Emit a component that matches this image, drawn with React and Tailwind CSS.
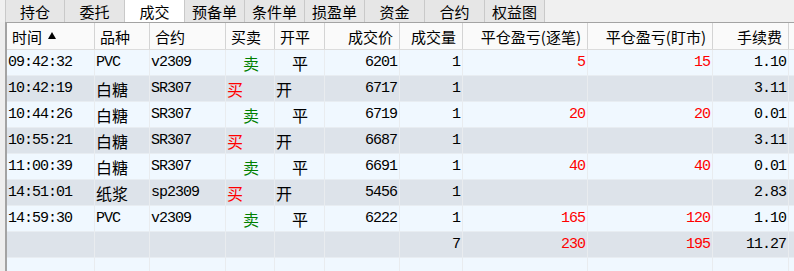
import React from "react";

const CJK = { fontFamily: '"Noto Sans CJK SC", "Noto Sans", sans-serif' };
const MONO = { fontFamily: '"Liberation Mono", "Noto Sans CJK SC", monospace' };

const tabs = ["持仓", "委托", "成交", "预备单", "条件单", "损盈单", "资金", "合约", "权益图"];

const cols = [
  { w: "w-[88px]", h: "时间", ha: "left" },
  { w: "w-[55px]", h: "品种", ha: "left" },
  { w: "w-[76px]", h: "合约", ha: "left" },
  { w: "w-[49px]", h: "买卖", ha: "left" },
  { w: "w-[50px]", h: "开平", ha: "left" },
  { w: "w-[75px]", h: "成交价", ha: "right" },
  { w: "w-[63px]", h: "成交量", ha: "right" },
  { w: "w-[125px]", h: "平仓盈亏(逐笔)", ha: "right" },
  { w: "w-[125px]", h: "平仓盈亏(盯市)", ha: "right" },
  { w: "w-[76px]", h: "手续费", ha: "right" },
];

const rows = [
  ["09:42:32", "PVC", "v2309", "卖", "平", "6201", "1", "5", "15", "1.10"],
  ["10:42:19", "白糖", "SR307", "买", "开", "6717", "1", "", "", "3.11"],
  ["10:44:26", "白糖", "SR307", "卖", "平", "6719", "1", "20", "20", "0.01"],
  ["10:55:21", "白糖", "SR307", "买", "开", "6687", "1", "", "", "3.11"],
  ["11:00:39", "白糖", "SR307", "卖", "平", "6691", "1", "40", "40", "0.01"],
  ["14:51:01", "纸浆", "sp2309", "买", "开", "5456", "1", "", "", "2.83"],
  ["14:59:30", "PVC", "v2309", "卖", "平", "6222", "1", "165", "120", "1.10"],
  ["", "", "", "", "", "", "7", "230", "195", "11.27"],
];

function isCJK(s) {
  return /[\u4e00-\u9fff]/.test(s);
}

function Cell({ i, v }) {
  const c = cols[i];
  let cls = "h-full shrink-0 flex items-center border-r border-[#e9ecef] text-[#000] ";
  let inner = null;
  if (i === 3 || i === 4) {
    const buy = v === "买" || v === "开";
    const color = i === 3 ? (v === "买" ? "text-[#ff0000]" : "text-[#008000]") : "text-[#000]";
    cls += buy ? "justify-start pl-[1px] " : "justify-start pl-[17px] ";
    inner = (
      <span className={`text-[16px] leading-none ${color}`} style={CJK}>
        {v}
      </span>
    );
  } else if (c.ha === "left") {
    cls += "justify-start pl-[1px] ";
    inner = isCJK(v) ? (
      <span className="text-[16px] leading-none" style={CJK}>
        {v}
      </span>
    ) : (
      <span className="text-[15px] leading-none tracking-[-1px]" style={MONO}>
        {v}
      </span>
    );
  } else {
    cls += "justify-end pr-[2px] ";
    const red = i === 7 || i === 8;
    inner = (
      <span
        className={`text-[15px] leading-none tracking-[-1px] ${red ? "text-[#ff0000]" : "text-[#000]"}`}
        style={MONO}
      >
        {v}
      </span>
    );
  }
  return <div className={`${c.w} ${cls}`}>{inner}</div>;
}

export default function App() {
  return (
    <div className="w-[794px] h-[271px] overflow-hidden bg-[#f0f0f0] flex flex-col" style={CJK}>
      {/* tab bar */}
      <div className="h-[22px] flex shrink-0 bg-[#f0f0f0]">
        <div className="w-[5px] shrink-0" />
        {tabs.map((t, i) => (
          <div
            key={t}
            className={`w-[60px] shrink-0 h-full flex items-center justify-center text-[15px] leading-none text-[#000] border-r border-[#c9c9c9] ${
              i === 0 ? "border-l" : ""
            } ${i === 2 ? "bg-[#ffffff]" : "bg-[#e6e6e6]"}`}
          >
            {t}
          </div>
        ))}
        <div className="flex-1" />
      </div>
      {/* content */}
      <div className="flex flex-1 min-h-0">
        <div className="w-[5px] shrink-0 bg-[#eeeeee]" />
        <div className="flex-1 min-w-0 border-t border-l-2 border-[#a3a3a3] flex flex-col bg-[#f0f8ff]">
          {/* header */}
          <div className="h-[27px] shrink-0 flex bg-[#fafafa] border-b border-[#dcdcdc]">
            {cols.map((c, i) => (
              <div
                key={c.h}
                className={`${c.w} h-full shrink-0 flex items-center border-r border-[#d4d4d4] text-[15px] leading-none text-[#000] ${
                  c.ha === "left" ? "justify-start pl-[5px]" : "justify-end pr-[6px]"
                }`}
              >
                <span>{c.h}</span>
                {i === 0 && (
                  <svg width="8" height="7" viewBox="0 0 8 7" className="ml-[6px] mb-[2px]">
                    <polygon points="4,0 8,7 0,7" fill="#000" />
                  </svg>
                )}
              </div>
            ))}
            <div className="flex-1" />
          </div>
          {/* rows */}
          {rows.map((r, ri) => (
            <div
              key={ri}
              className={`h-[26px] shrink-0 flex border-b border-[#e8edf2] ${
                ri % 2 === 0 ? "bg-[#f0f8ff]" : "bg-[#dde3ea]"
              }`}
            >
              {r.map((v, i) => (
                <Cell key={i} i={i} v={v} />
              ))}
              <div className="flex-1" />
            </div>
          ))}
          <div className="flex flex-1 bg-[#f0f8ff]">
            {cols.map((c, i) => (
              <div key={i} className={`${c.w} shrink-0 border-r border-[#e9ecef]`} />
            ))}
          </div>
        </div>
      </div>
    </div>
  );
}
